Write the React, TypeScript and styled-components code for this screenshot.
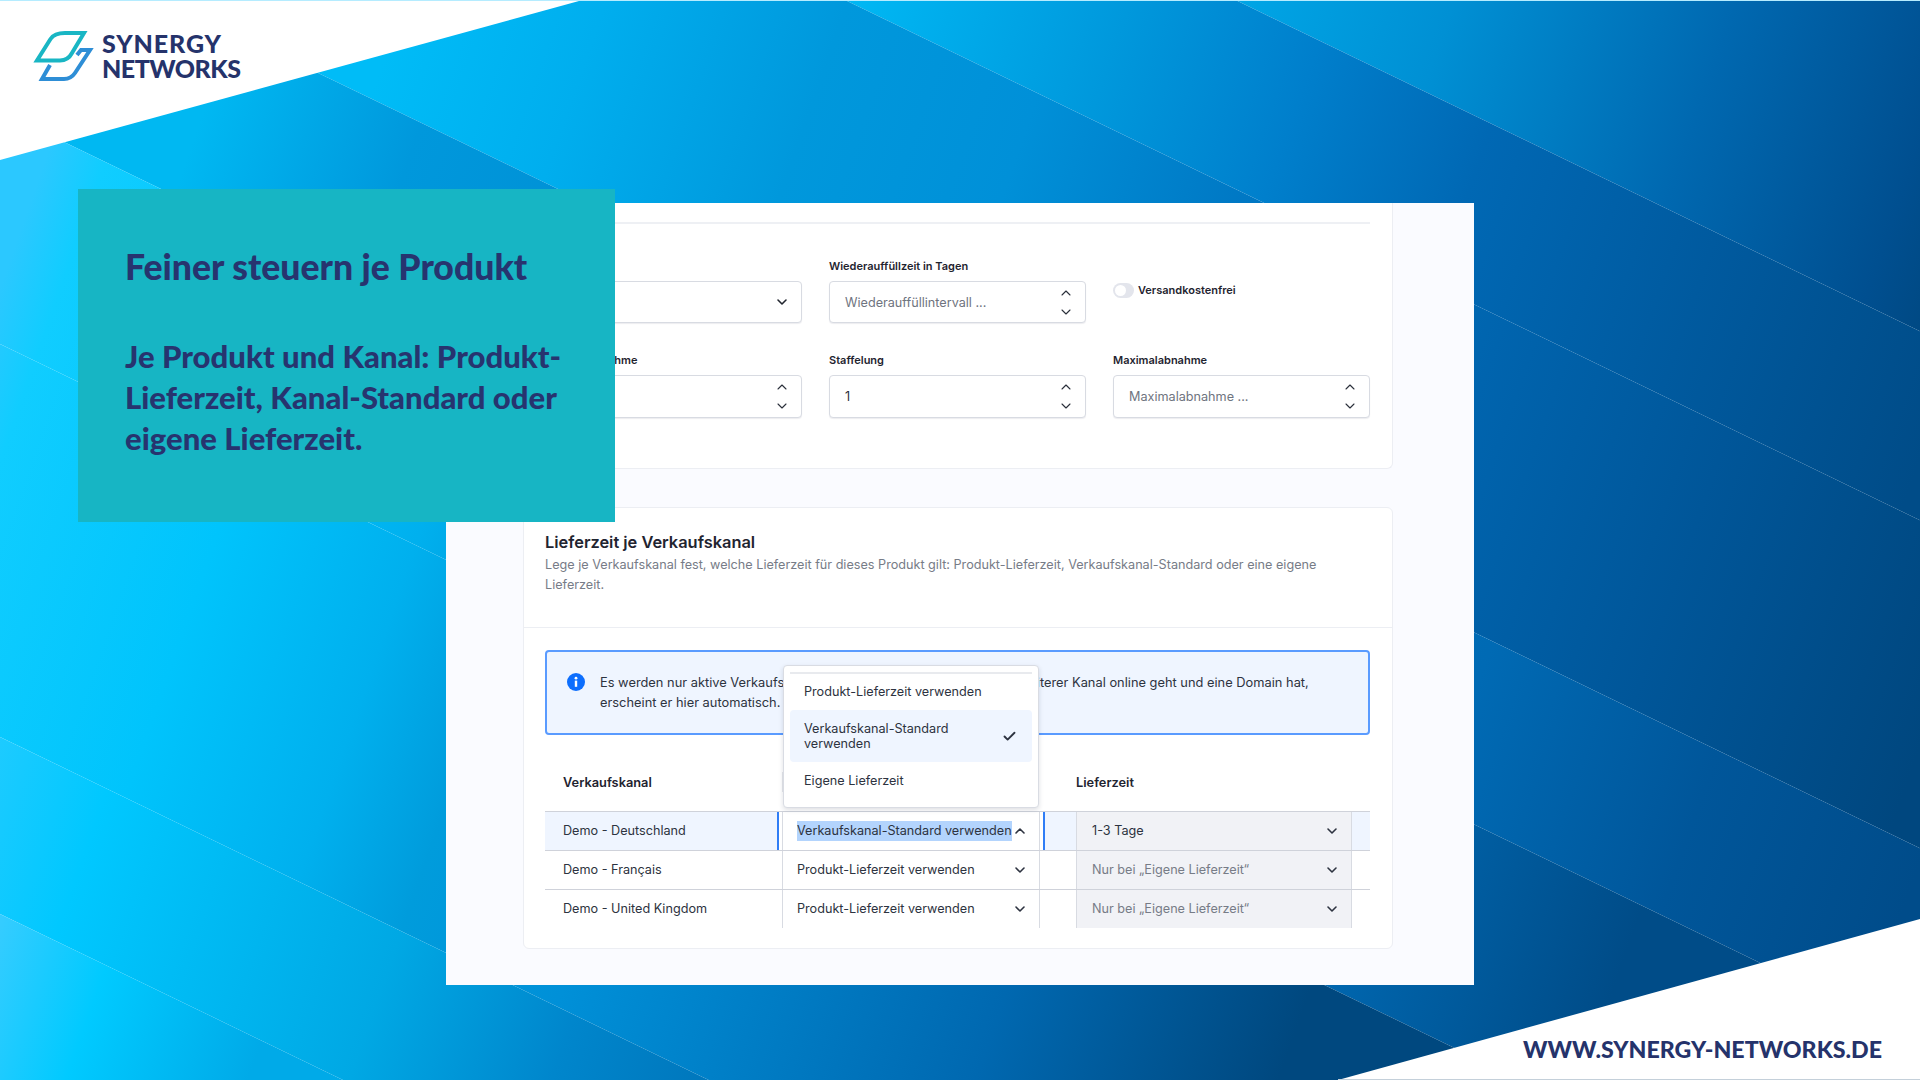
import styled, { createGlobalStyle } from "styled-components";
import { Check, ChevronDown, ChevronUp } from "lucide-react";

const SLOPE = 0.484;
const GRADIENT_RANGE = 1.25;

// facets of the slide background: [top intercept, bottom intercept, colour stops]
const bands: { top: number; bottom: number; stops: [number, string][] }[] = [
    { top: -1000, bottom: -598, stops: [[0.6, "#00a8e8"], [0.72, "#0090d4"], [0.86, "#0068b0"], [0.975, "#004f90"], [1.02, "#00477f"]] },
    { top: -598, bottom: -409, stops: [[0.42, "#00b8f4"], [0.56, "#0098dc"], [0.66, "#007fcc"], [0.76, "#0068b4"], [0.89, "#005a9f"], [1.03, "#004c88"]] },
    { top: -409, bottom: -81, stops: [[0.2, "#00bcf7"], [0.3, "#00aeee"], [0.42, "#0098dc"], [0.53, "#0090d8"], [0.65, "#0078c4"], [0.8, "#0064ae"], [0.93, "#005699"], [1.08, "#00477f"]] },
    { top: -81, bottom: 111, stops: [[0.12, "#00b8f2"], [0.23, "#0098dc"], [0.85, "#006ab4"], [0.98, "#00569a"], [1.1, "#004c8a"]] },
    { top: 111, bottom: 344, stops: [[0.05, "#2bc8ff"], [0.08, "#10cdff"], [0.2, "#00c4fc"], [0.3, "#00b0ee"], [0.36, "#009cdc"], [0.83, "#0066ae"], [0.97, "#004c88"]] },
    { top: 344, bottom: 737, stops: [[0.05, "#2bc8ff"], [0.08, "#10cdff"], [0.2, "#00c4fc"], [0.3, "#00b0ee"], [0.36, "#009cdc"], [0.45, "#0090d8"], [0.67, "#0068b0"], [0.82, "#00487f"]] },
    { top: 737, bottom: 914, stops: [[0.1, "#2accff"], [0.19, "#00c8ff"], [0.36, "#00a8e4"], [0.46, "#0086cc"], [0.63, "#0065aa"], [0.79, "#00497f"]] },
    { top: 914, bottom: 1500, stops: [[0.16, "#35ccff"], [0.22, "#00caff"], [0.31, "#00aae8"]] },
];

const rows = [
    { name: "Demo - Deutschland", source: "Verkaufskanal-Standard verwenden", time: "1-3 Tage", active: true },
    { name: "Demo - Français", source: "Produkt-Lieferzeit verwenden", time: "Nur bei „Eigene Lieferzeit“", active: false },
    { name: "Demo - United Kingdom", source: "Produkt-Lieferzeit verwenden", time: "Nur bei „Eigene Lieferzeit“", active: false },
];

const Stepper = () => (
    <StepperBox>
        <ChevronUp size={16} strokeWidth={1.6} />
        <ChevronDown size={16} strokeWidth={1.6} />
    </StepperBox>
);

const App = () => {
    return (
        <Slide>
            <GlobalStyle />
            <Backdrop viewBox="0 0 1920 1080" aria-hidden="true">
                <defs>
                    {bands.map((band, i) => (
                        <linearGradient key={i} id={`band${i}`} gradientUnits="userSpaceOnUse" x1="0" y1="0" x2="2250" y2="787.5">
                            {band.stops.map(([offset, color]) => (
                                <stop key={offset} offset={offset / GRADIENT_RANGE} stopColor={color} />
                            ))}
                        </linearGradient>
                    ))}
                </defs>
                {bands.map((band, i) => (
                    <polygon
                        key={i}
                        fill={`url(#band${i})`}
                        points={`0,${band.top} 1920,${band.top + 1920 * SLOPE} 1920,${band.bottom + 1920 * SLOPE} 0,${band.bottom}`}
                    />
                ))}
                <rect x="0" y="0" width="1920" height="1" fill="#b5ecff" />
                <polygon points="0,1 579,1 0,160" fill="#fff" />
                <polygon points="1338,1080 1920,919 1920,1080" fill="#fff" />
                <rect x="1338" y="1079" width="582" height="1" fill="#c4d0da" />
            </Backdrop>

            <Logo>
                <svg width="62" height="54" viewBox="32 29 62 54" fill="none" aria-hidden="true">
                    <path d="M65 33 L84 33 L72 53 Q68 60.5 60 60.5 L37 60.5 L50.5 39 Q54.5 33 65 33 Z" stroke="#19b6c4" strokeWidth="4" />
                    <path d="M77 55 L81 50 L90 50 L75 73 Q71 79 64 79 L42 79 L50 65" stroke="#2e8ed6" strokeWidth="4" />
                </svg>
                <LogoText>
                    <LogoLine $spacing={0.9}>SYNERGY</LogoLine>
                    <LogoLine $spacing={-0.5}>NETWORKS</LogoLine>
                </LogoText>
            </Logo>

            <Panel>
                <CardTop>
                    <TopRule />
                    <FormGrid>
                        <Field>
                            <FieldLabel />
                            <InputBox>
                                <ChevronDown size={16} strokeWidth={2.4} />
                            </InputBox>
                        </Field>
                        <Field>
                            <FieldLabel>Wiederauffüllzeit in Tagen</FieldLabel>
                            <InputBox>
                                <Placeholder>Wiederauffüllintervall ...</Placeholder>
                                <Stepper />
                            </InputBox>
                        </Field>
                        <ToggleField>
                            <Toggle />
                            <ToggleLabel>Versandkostenfrei</ToggleLabel>
                        </ToggleField>
                        <Field>
                            <FieldLabel>Mindestabnahme</FieldLabel>
                            <InputBox $tall>
                                <Stepper />
                            </InputBox>
                        </Field>
                        <Field>
                            <FieldLabel>Staffelung</FieldLabel>
                            <InputBox $tall>
                                <InputValue>1</InputValue>
                                <Stepper />
                            </InputBox>
                        </Field>
                        <Field>
                            <FieldLabel>Maximalabnahme</FieldLabel>
                            <InputBox $tall>
                                <Placeholder>Maximalabnahme ...</Placeholder>
                                <Stepper />
                            </InputBox>
                        </Field>
                    </FormGrid>
                </CardTop>

                <CardChannel>
                    <CardHeader>
                        <CardTitle>Lieferzeit je Verkaufskanal</CardTitle>
                        <CardDesc>
                            Lege je Verkaufskanal fest, welche Lieferzeit für dieses Produkt gilt: Produkt-Lieferzeit, Verkaufskanal-Standard oder eine eigene
                            <br />
                            Lieferzeit.
                        </CardDesc>
                    </CardHeader>
                    <CardBody>
                        <Alert>
                            <svg width="18" height="18" viewBox="0 0 18 18" aria-hidden="true">
                                <circle cx="9" cy="9" r="9" fill="#0d6efd" />
                                <rect x="7.8" y="7.6" width="2.4" height="6.2" fill="#fff" />
                                <circle cx="9" cy="5.2" r="1.4" fill="#fff" />
                            </svg>
                            <AlertText>
                                Es werden nur aktive Verkaufskanäle mit Shop angezeigt. Sobald ein weiterer Kanal online geht und eine Domain hat,
                                <br />
                                erscheint er hier automatisch.
                            </AlertText>
                        </Alert>

                        <TableHead>
                            <HeadCell>Verkaufskanal</HeadCell>
                            <HeadDivider />
                            <span />
                            <HeadCell>Lieferzeit</HeadCell>
                        </TableHead>

                        {rows.map((row) => (
                            <Row key={row.name} $active={row.active}>
                                <NameCell>{row.name}</NameCell>
                                <SelectCell $focused={row.active}>
                                    {row.active ? <Selected>{row.source}</Selected> : <span>{row.source}</span>}
                                    {row.active ? <ChevronUp size={16} strokeWidth={2.4} /> : <ChevronDown size={16} strokeWidth={2.4} />}
                                    {row.active && (
                                        <Menu>
                                            <MenuRule />
                                            <MenuItem $height={36}>Produkt-Lieferzeit verwenden</MenuItem>
                                            <MenuItem $height={52} $selected>
                                                <MenuItemText>Verkaufskanal-Standard verwenden</MenuItemText>
                                                <Check size={15} strokeWidth={3} />
                                            </MenuItem>
                                            <MenuItem $height={38}>Eigene Lieferzeit</MenuItem>
                                        </Menu>
                                    )}
                                </SelectCell>
                                <span />
                                <TimeCell $muted={!row.active}>
                                    <span>{row.time}</span>
                                    <ChevronDown size={16} strokeWidth={2.4} />
                                </TimeCell>
                            </Row>
                        ))}
                    </CardBody>
                </CardChannel>
            </Panel>

            <Callout>
                <CalloutTitle>Feiner steuern je Produkt</CalloutTitle>
                <CalloutBody>Je Produkt und Kanal: Produkt-Lieferzeit, Kanal-Standard oder eigene Lieferzeit.</CalloutBody>
            </Callout>

            <SiteUrl>WWW.SYNERGY-NETWORKS.DE</SiteUrl>
        </Slide>
    );
};

export default App;

// styled-component

const GlobalStyle = createGlobalStyle`
    * {
        box-sizing: border-box;
    }
    body {
        margin: 0;
        font-family: Inter, "Liberation Sans", sans-serif;
    }
`;

const Slide = styled.div`
    position: relative;
    width: 1920px;
    height: 1080px;
    overflow: hidden;
    padding: 203px 446px 95px;
`;

const Backdrop = styled.svg`
    position: absolute;
    inset: 0;
    width: 1920px;
    height: 1080px;
`;

const Logo = styled.div`
    position: absolute;
    left: 32px;
    top: 29px;
    display: flex;
    align-items: center;
    gap: 8px;
`;

const LogoText = styled.div`
    display: flex;
    flex-direction: column;
    font-family: Lato, sans-serif;
    font-weight: 900;
    font-size: 25px;
    line-height: 25px;
    color: #25336b;
`;

const LogoLine = styled.span<{ $spacing: number }>`
    letter-spacing: ${(props) => props.$spacing}px;
`;

const Panel = styled.div`
    position: relative;
    width: 1028px;
    height: 782px;
    overflow: hidden;
    background: #fafbff;
    padding-left: 77px;
`;

const CardTop = styled.section`
    width: 870px;
    height: 266px;
    background: #fff;
    border: 1px solid #eceef3;
    border-top: 0;
    border-radius: 0 0 6px 6px;
    padding: 19px 22px 0 21px;
`;

const TopRule = styled.div`
    height: 2px;
    background: #eef0f4;
    margin-bottom: 34px;
`;

const FormGrid = styled.div`
    display: grid;
    grid-template-columns: repeat(3, 257px);
    column-gap: 27px;
    row-gap: 29px;
`;

const Field = styled.div`
    display: flex;
    flex-direction: column;
    gap: 7px;
`;

const FieldLabel = styled.label`
    height: 16px;
    font-size: 11px;
    line-height: 16px;
    font-weight: 600;
    color: #1f2430;
`;

const InputBox = styled.div<{ $tall?: boolean }>`
    position: relative;
    height: ${(props) => (props.$tall ? "43px" : "42px")};
    display: flex;
    align-items: center;
    justify-content: flex-end;
    padding: 0 11px 0 15px;
    background: #fff;
    border: 1px solid #d8dbe2;
    border-radius: 4px;
    box-shadow: 0 1px 1px rgba(20, 30, 60, 0.08);
    color: #22262f;
`;

const Placeholder = styled.span`
    margin-right: auto;
    font-size: 12.65px;
    color: #6f7480;
`;

const InputValue = styled(Placeholder)`
    color: #2a2f3a;
`;

const StepperBox = styled.div`
    display: flex;
    flex-direction: column;
    gap: 3px;
    color: #2a2f3a;
`;

const ToggleField = styled.div`
    display: flex;
    align-items: flex-start;
    gap: 4px;
    padding-top: 25px;
`;

const Toggle = styled.span`
    width: 21px;
    height: 15px;
    border-radius: 8px;
    background: #e3e5ec;
    display: flex;
    align-items: center;
    padding-left: 2px;

    &::before {
        content: "";
        width: 11px;
        height: 11px;
        border-radius: 50%;
        background: #fff;
    }
`;

const ToggleLabel = styled.span`
    font-size: 11px;
    line-height: 15px;
    font-weight: 600;
    color: #1f2430;
`;

const CardChannel = styled.section`
    width: 870px;
    height: 442px;
    margin-top: 38px;
    background: #fff;
    border: 1px solid #eceef3;
    border-radius: 6px;
`;

const CardHeader = styled.header`
    padding: 22px 21px 32px;
    border-bottom: 1px solid #eceef3;
`;

const CardTitle = styled.h2`
    margin: 0;
    font-size: 16.4px;
    line-height: 24px;
    font-weight: 600;
    color: #1f2430;
`;

const CardDesc = styled.p`
    margin: 1px 0 0;
    font-size: 12.65px;
    line-height: 20px;
    color: #777c87;
`;

const CardBody = styled.div`
    padding: 22px 22px 0 21px;
`;

const Alert = styled.div`
    height: 85px;
    display: flex;
    align-items: flex-start;
    gap: 15px;
    padding: 21px 20px 0;
    background: #eff5ff;
    border: 2px solid #5a9bff;
    border-radius: 4px;
`;

const AlertText = styled.p`
    margin: 0;
    font-size: 12.85px;
    line-height: 20px;
    white-space: nowrap;
    color: #2d3340;
`;

const TableHead = styled.div`
    display: grid;
    grid-template-columns: 237px 2px 292px 1fr;
    align-items: center;
    height: 44px;
    margin-top: 25px;
    margin-bottom: 7px;
`;

const HeadCell = styled.span`
    font-size: 12.8px;
    font-weight: 600;
    color: #1f2430;
    padding-left: 18px;

    &:last-child {
        padding-left: 0;
    }
`;

const HeadDivider = styled.span`
    height: 20px;
    background: #e5e7eb;
`;

const Row = styled.div<{ $active: boolean }>`
    display: grid;
    grid-template-columns: 237px 258px 36px 276px 18px;
    height: 39px;
    border-top: 1px solid #cfd2da;
    background: ${(props) => (props.$active ? "#eff5ff" : "#fff")};
    font-size: 12.65px;
    color: #2d3340;
`;

const NameCell = styled.div`
    display: flex;
    align-items: center;
    padding: 0 0 1px 18px;
`;

const SelectCell = styled.div<{ $focused: boolean }>`
    position: relative;
    display: flex;
    align-items: center;
    justify-content: space-between;
    padding: 0 11px 1px 14px;
    background: #fff;
    border-left: 1px solid #d8dbe2;
    border-right: 1px solid #d8dbe2;
    box-shadow: ${(props) =>
        props.$focused ? "-3px 0 0 #fff, 3px 0 0 #fff, -5px 0 0 #2f7df6, 5px 0 0 #2f7df6" : "none"};

    > svg {
        flex-shrink: 0;
    }
`;

const Selected = styled.span`
    background: #b3d4fd;
    line-height: 20px;
    white-space: nowrap;
`;

const TimeCell = styled.div<{ $muted: boolean }>`
    display: flex;
    align-items: center;
    justify-content: space-between;
    padding: 0 11px 1px 15px;
    background: #f1f2f6;
    border-left: 1px solid #d8dbe2;
    border-right: 1px solid #d8dbe2;

    span {
        color: ${(props) => (props.$muted ? "#777c87" : "#2d3340")};
    }
`;

const Menu = styled.div`
    position: absolute;
    left: 0;
    bottom: calc(100% + 4px);
    width: 256px;
    height: 143px;
    padding: 6px 6px;
    background: #fff;
    border: 1px solid #d9dce3;
    border-radius: 4px;
    box-shadow: 0 2px 5px rgba(20, 30, 60, 0.14);
    color: #2d3340;
`;

const MenuRule = styled.div`
    height: 2px;
    background: #e8eaee;
`;

const MenuItem = styled.div<{ $height: number; $selected?: boolean }>`
    display: flex;
    align-items: center;
    justify-content: space-between;
    height: ${(props) => props.$height}px;
    padding: 0 15px 0 14px;
    border-radius: 4px;
    line-height: 15.5px;
    background: ${(props) => (props.$selected ? "#eff5ff" : "transparent")};
`;

const MenuItemText = styled.span`
    max-width: 170px;
`;

const Callout = styled.aside`
    position: absolute;
    left: 78px;
    top: 189px;
    width: 537px;
    height: 333px;
    padding: 54px 36px 0 47px;
    background: #17b5c4;
    color: #27346f;
    font-family: Lato, sans-serif;
    font-weight: 900;
`;

const CalloutTitle = styled.h1`
    margin: 0 0 45px;
    font-size: 35.6px;
    line-height: 48px;
    font-weight: 900;
`;

const CalloutBody = styled.p`
    margin: 0;
    font-size: 31.1px;
    line-height: 41px;
`;

const SiteUrl = styled.div`
    position: absolute;
    left: 1523px;
    top: 1034px;
    font-family: Lato, sans-serif;
    font-weight: 900;
    font-size: 23.2px;
    line-height: 30px;
    white-space: nowrap;
    color: #25336b;
`;
